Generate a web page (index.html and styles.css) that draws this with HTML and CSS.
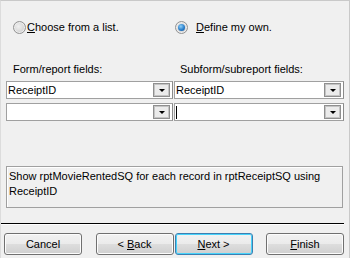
FILE: index.html
```html
<!DOCTYPE html>
<html lang="en">
<head>
  <meta charset="UTF-8">
  <title>Subform Wizard</title>
  <link rel="stylesheet" href="styles.css">
</head>
<body>
<div class="wizard">
  <div class="fields">
    <label class="radio-row left">
      <span class="radio"></span>
      <span><u>C</u>hoose from a list.</span>
    </label>
    <label class="radio-row right">
      <span class="radio checked"></span>
      <span><u>D</u>efine my own.</span>
    </label>

    <div class="field-label left">Form/report fields:</div>
    <div class="field-label right">Subform/subreport fields:</div>

    <div class="combo first"><span class="combo-text">ReceiptID</span><span class="combo-btn"></span></div>
    <div class="combo first"><span class="combo-text">ReceiptID</span><span class="combo-btn"></span></div>
    <div class="combo"><span class="combo-text"></span><span class="combo-btn"></span></div>
    <div class="combo"><span class="combo-text"><span class="caret"></span></span><span class="combo-btn"></span></div>
  </div>

  <div class="summary">Show rptMovieRentedSQ for each record in rptReceiptSQ using ReceiptID</div>

  <div class="separator"></div>

  <div class="buttons">
    <button class="btn">Cancel</button>
    <div class="nav-pair">
      <button class="btn">&lt; <u>B</u>ack</button>
      <button class="btn default"><u>N</u>ext &gt;</button>
    </div>
    <button class="btn"><u>F</u>inish</button>
  </div>
</div>
</body>
</html>
```

FILE: styles.css
```css
* {
  box-sizing: border-box;
}
body {
  margin: 0;
  font-family: "Liberation Sans", Arial, sans-serif;
  font-size: 11px;
  color: #000;
}
.wizard {
  width: 350px;
  height: 258px;
  background: #f0f0f0;
  border-top: 1px solid #c9c9c9;
  border-right: 1px solid #c9c9c9;
  border-left: 1px solid #dcdcdc;
  display: flex;
  flex-direction: column;
}
.fields {
  display: grid;
  grid-template-columns: 168px 170px;
  padding: 19px 0 0 5px;
}
.radio-row {
  display: flex;
  align-items: center;
  height: 14px;
}
.radio-row.left {
  padding-left: 7px;
}
.radio-row.right {
  padding-left: 1px;
}
.radio-row.left .radio {
  margin-right: 1px;
}
.radio-row.right .radio {
  margin-right: 8px;
}
.radio {
  width: 13px;
  height: 13px;
  border-radius: 50%;
  border: 1px solid #939393;
  background: radial-gradient(circle at 40% 40%, #f0f0f0 0%, #d6d6d6 60%, #c2c2c2 100%);
  box-shadow: inset 0 0 0 1px #ededed;
  flex: none;
  position: relative;
}
.radio.checked::after {
  content: "";
  position: absolute;
  left: 2px;
  top: 2px;
  width: 7px;
  height: 7px;
  border-radius: 50%;
  background: radial-gradient(circle at 40% 35%, #8fd0f8 0%, #2a7fcb 55%, #0d4f95 100%);
}
.field-label {
  margin-top: 28px;
  height: 14px;
  line-height: 14px;
}
.field-label.left {
  padding-left: 7px;
}
.field-label.right {
  padding-left: 6px;
}
.combo {
  display: flex;
  align-items: center;
  height: 18px;
  margin-top: 4px;
  background: #fff;
  border: 1px solid #a0a0a0;
  border-right-color: #8a8a8a;
  padding-right: 2px;
}
.combo:nth-of-type(odd) {
  margin-right: 1px;
}
.combo.first {
  margin-top: 5px;
}
.combo-text {
  flex: 1;
  padding-left: 1px;
  line-height: 14px;
}
.caret {
  display: inline-block;
  width: 1px;
  height: 13px;
  background: #000;
  vertical-align: middle;
}
.combo-btn {
  width: 17px;
  height: 14px;
  border: 1px solid #8f8f8f;
  box-shadow: inset 0 0 0 1px #c4c4c4;
  background: #ebebeb;
  position: relative;
}
.combo-btn::after {
  content: "";
  position: absolute;
  left: 5px;
  top: 5px;
  border-left: 3px solid transparent;
  border-right: 3px solid transparent;
  border-top: 3px solid #000;
}
.summary {
  margin: 45px 6px 0 5px;
  height: 42px;
  border: 1px solid #a0a0a0;
  box-shadow: inset 1px 1px 0 #fff;
  padding: 2px 2px 0 2px;
  line-height: 15px;
}
.separator {
  margin: 15px 5px 0 0;
  height: 2px;
  border-top: 1px solid #000;
  border-bottom: 1px solid #fff;
}
.buttons {
  display: flex;
  justify-content: space-between;
  padding: 8px 5px 0 3px;
}
.nav-pair {
  display: flex;
  gap: 1px;
}
.btn {
  font: inherit;
  color: #000;
  width: 78px;
  height: 22px;
  padding: 0;
  border: 1px solid #707070;
  border-radius: 3px;
  background: linear-gradient(#f2f2f2 0%, #ebebeb 48%, #dddddd 52%, #cfcfcf 100%);
  box-shadow: inset 0 0 0 1px #fcfcfc;
}
.btn.default {
  border-color: #3c7fb1;
  box-shadow: inset 0 0 0 1px #48d3fb;
}
```
